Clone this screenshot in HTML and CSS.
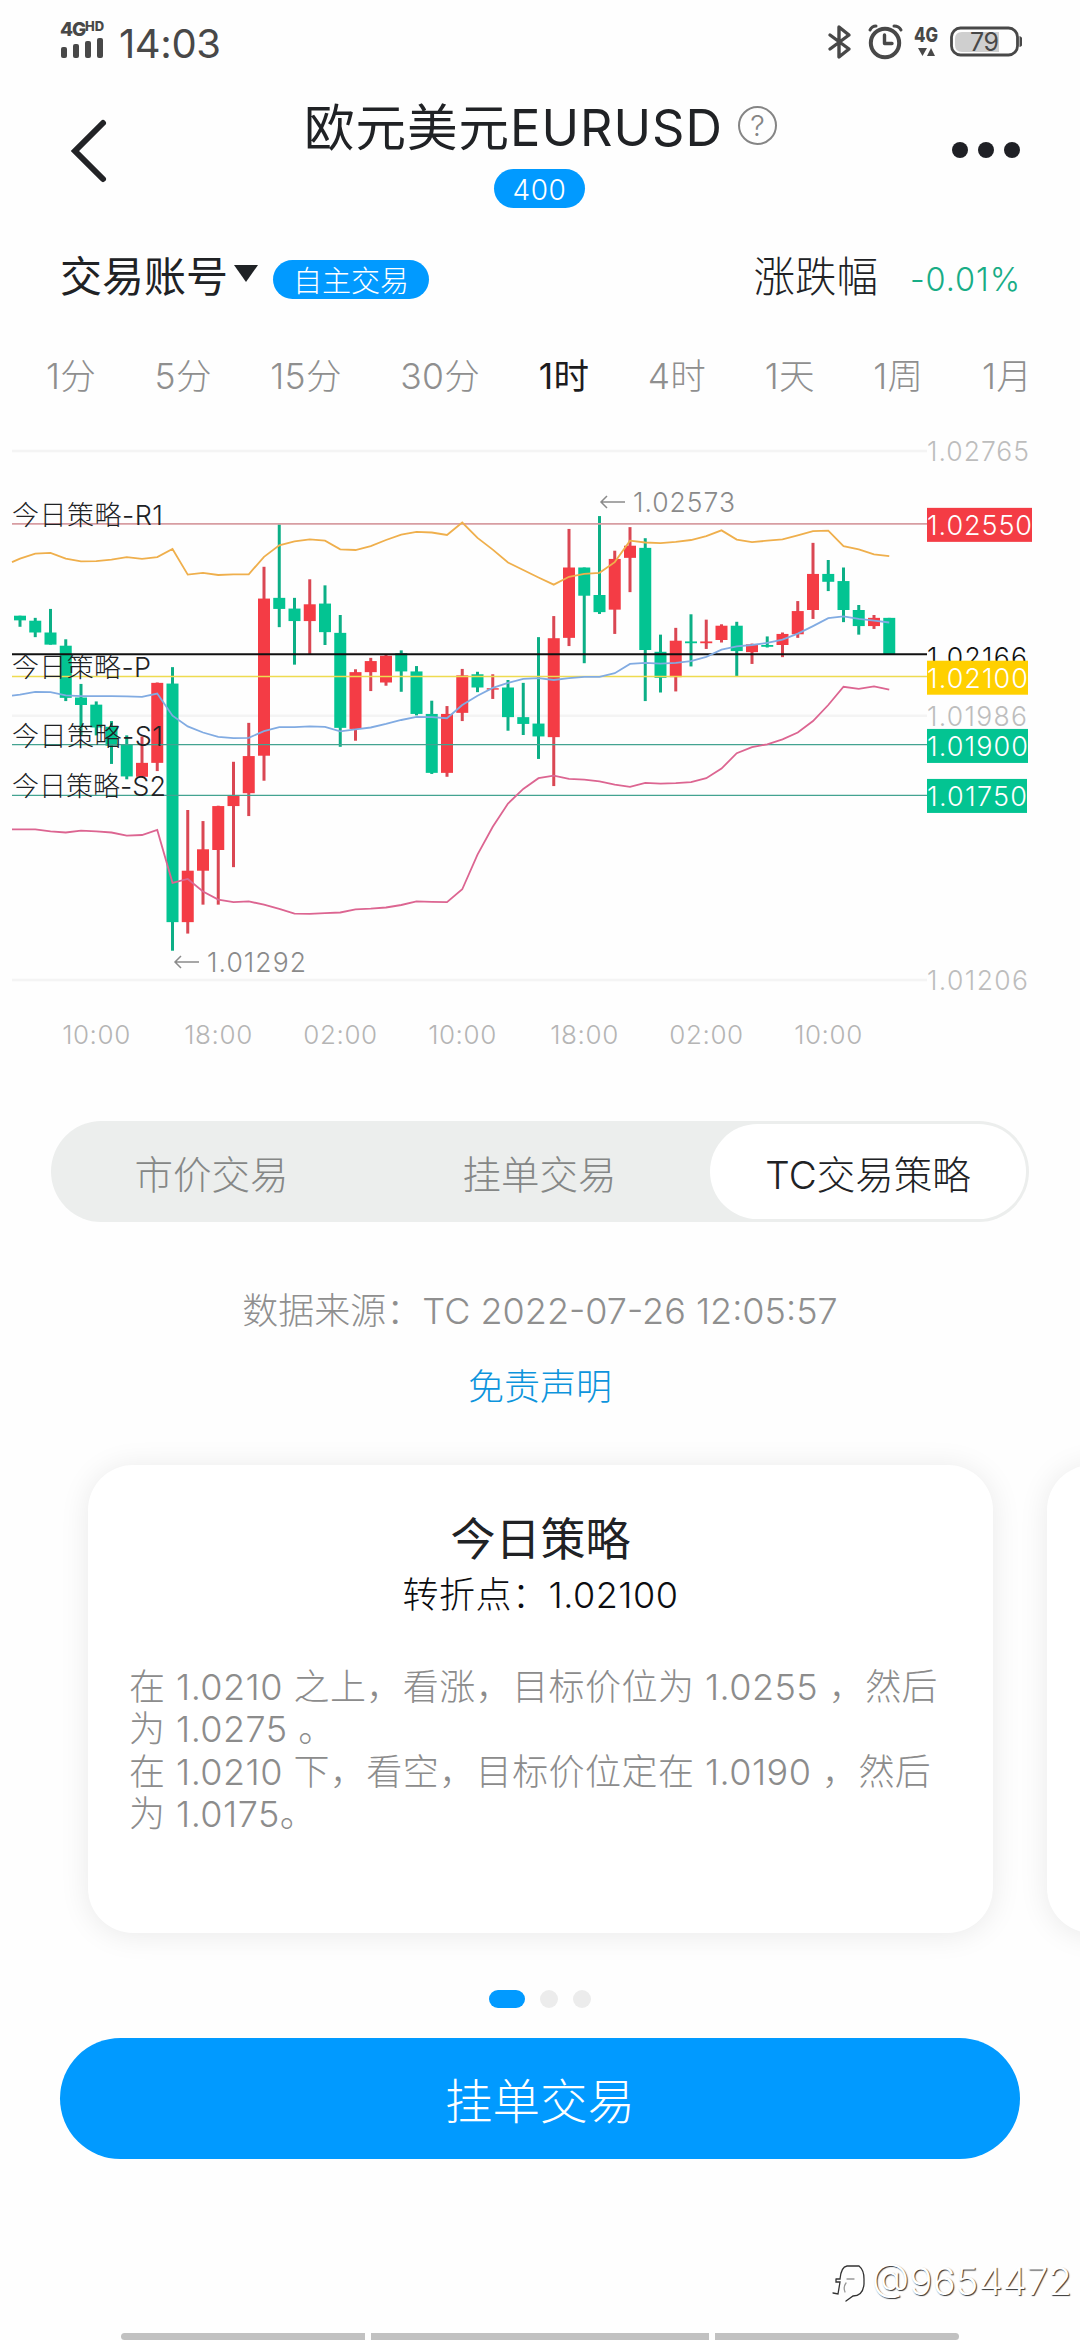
FILE: index.html
```html
<!DOCTYPE html>
<html lang="zh-CN">
<head>
<meta charset="utf-8">
<title>欧元美元EURUSD</title>
<link rel="stylesheet" href="styles.css">
</head>
<body>
<div class="screen">
  <div class="status">
    <div class="carrier">
      <div class="net">4G<span class="hd">HD</span></div>
      <svg class="bars" width="44" height="21" viewBox="0 0 44 21"><g fill="#484848"><rect x="1" y="10" width="6" height="11" rx="2"/><rect x="13" y="7" width="6" height="14" rx="2"/><rect x="25" y="4" width="6" height="17" rx="2"/><rect x="37" y="1" width="6" height="20" rx="2"/></g></svg>
    </div>
    <div class="clock">14:03</div>
    <svg class="status-icons" width="200" height="44" viewBox="0 0 200 44">
      <g fill="none" stroke="#484848" stroke-width="3.4" stroke-linecap="round" stroke-linejoin="round">
        <path d="M8 15L27 29L17 37V7L27 15L8 29"/>
        <circle cx="63" cy="23" r="14.2" stroke-width="4"/>
        <path d="M62.5 15V23.500H70" />
        <path d="M48 10Q50 6 54 6M72 6Q77 6 79 10" stroke-width="3"/>
        <rect x="129.500" y="8" width="66" height="27" rx="9" stroke-width="2.800"/>
      </g>
      <path d="M140 12H177V32H140Q133 32 133 25V19Q133 12 140 12Z" fill="#cfcfcf"/>
      <path d="M197.500 16Q201 17 201 22Q201 26 197.500 27Z" fill="#484848"/>
      <path d="M96 28H105L100.500 36ZM105 36H113L109 28Z" fill="#484848"/>
      <text class="lte" x="92" y="22" textLength="24" lengthAdjust="spacingAndGlyphs">4G</text>
      <text class="charge" x="148" y="31" textLength="29">79</text>
    </svg>
  </div>

  <header class="header">
    <svg class="back" width="40" height="68" viewBox="0 0 40 68"><path d="M34 6L6 34L34 62" fill="none" stroke="#222326" stroke-width="6" stroke-linecap="round"/></svg>
    <div class="heading">
      <div class="title-line"><h1>欧元美元EURUSD</h1><span class="help">?</span></div>
      <span class="pill leverage">400</span>
    </div>
    <div class="more"><i></i><i></i><i></i></div>
  </header>

  <div class="account">
    <span class="account-name">交易账号</span>
    <svg class="caret" width="24" height="17" viewBox="0 0 24 17"><path d="M0 0H24L12 17Z" fill="#1f2225"/></svg>
    <span class="pill mode">自主交易</span>
    <span class="change-label">涨跌幅</span>
    <span class="change">-0.01%</span>
  </div>

  <nav class="periods">
    <span>1分</span><span>5分</span><span>15分</span><span>30分</span><span class="on">1时</span><span>4时</span><span>1天</span><span>1周</span><span>1月</span>
  </nav>

  <svg class="chart" id="chart" width="1080" height="630" viewBox="0 0 1080 630"></svg>

  <div class="segments">
    <span>市价交易</span><span>挂单交易</span><span class="selected">TC交易策略</span>
  </div>

  <p class="source">数据来源：TC 2022-07-26 12:05:57</p>
  <p class="disclaimer">免责声明</p>

  <div class="carousel">
    <section class="card">
      <h2>今日策略</h2>
      <p class="pivot">转折点：1.02100</p>
      <p class="advice">在 1.0210 之上，看涨，目标价位为 1.0255 ，然后<br>为 1.0275 。<br>在 1.0210 下，看空，目标价位定在 1.0190 ，然后<br>为 1.0175。</p>
    </section>
    <section class="card"></section>
  </div>

  <div class="pages"><i class="current"></i><i></i><i></i></div>
  <button class="order">挂单交易</button>

  <div class="watermark">
    <svg width="36" height="42" viewBox="0 0 36 42" fill="none" stroke="#333" stroke-width="1.300" stroke-linecap="round"><path d="M5 19H9Q10 7 16 6H28Q33 10 33 19V24Q32 36 22 36L15 41M5 19V22H9L7 34L2 33"/><path d="M16 19H23M15 23Q12 27 14 32" stroke="#999"/></svg>
    <span>@9654472</span>
  </div>
  <div class="gesture"><i></i><i></i><i></i></div>
</div>
<script src="chart.js"></script>
</body>
</html>
```
FILE: styles.css
```css
* { box-sizing: border-box; }
body { margin: 0; background: #fefefe; font-family: Inter, "Noto Sans CJK SC", sans-serif; color: #202225; }
h1, h2, p { margin: 0; }
.screen { position: relative; width: 1080px; height: 2340px; overflow: hidden; display: flex; flex-direction: column; font-weight: 300; }

.status { height: 84px; display: flex; align-items: flex-start; padding: 20px 60px 0; color: #484848; flex: none; }
.carrier { width: 46px; display: flex; flex-direction: column; }
.net { height: 17px; font: 800 19px/19px Inter, sans-serif; letter-spacing: -1.2px; white-space: nowrap; display: flex; }
.hd { font-size: 13px; line-height: 13px; letter-spacing: 0; }
.bars { display: block; }
.clock { margin-left: 13px; font-size: 40px; line-height: 48px; font-weight: 400; letter-spacing: -.4px; }
.status-icons { margin: 0 -2px 0 auto; }
.lte { font: 800 20px Inter, sans-serif; fill: #484848; }
.charge { font: 400 25px Inter, sans-serif; fill: #484848; }

.header { height: 144px; padding: 0 60px 0 69px; display: flex; justify-content: space-between; align-items: flex-start; flex: none; }
.back { margin-top: 33px; }
.heading { width: 490px; margin-left: 18px; display: flex; flex-direction: column; align-items: center; }
.title-line { display: flex; align-items: center; height: 85px; margin-left: 2px; gap: 15px; }
h1 { font-size: 50.500px; line-height: 76px; font-weight: 400; white-space: nowrap; letter-spacing: 1px; padding-top: 2px; }
.help { width: 39px; height: 39px; margin-top: -2px; border: 2px solid #858585; border-radius: 50%; font-size: 29px; line-height: 35px; text-align: center; color: #858585; }
.pill { display: flex; align-items: center; justify-content: center; height: 39px; border-radius: 20px; background: #019aff; color: #fff; font-size: 28px; padding-top: 2px; }
.leverage { width: 91px; letter-spacing: .6px; }
.more { display: flex; gap: 10px; margin-top: 58px; }
.more i { width: 16px; height: 16px; border-radius: 50%; background: #1f2025; }

.account { height: 102px; padding: 0 59px 0 60px; display: flex; align-items: center; flex: none; }
.account-name { font-size: 42px; line-height: 60px; font-weight: 400; margin-top: -5px; }
.caret { margin: -12px 0 0 6px; }
.mode { width: 156px; margin-left: 15px; font-size: 29px; padding-top: 0; }
.change-label { margin: -10px 32px 0 auto; font-size: 41.500px; }
.change { font-size: 32.500px; letter-spacing: .9px; color: #18ad86; }

.periods { height: 90px; padding: 0 48px 4px 46px; display: flex; justify-content: space-between; align-items: center; font-size: 35.500px; letter-spacing: .3px; color: #8f8f8f; flex: none; }
.periods .on { color: #1c1c1e; font-weight: 400; }

.chart { display: block; margin-top: 10px; flex: none; }
.chart text { font-family: Inter, "Noto Sans CJK SC", sans-serif; font-weight: 300; }
.axis { font-size: 26.500px; fill: #bdbdbd; }
.time { font-size: 26px; letter-spacing: .6px; fill: #b5b5b5; }
.tagtext { font-size: 27px; fill: #fff; }
.last { font-size: 26.500px; fill: #111; }
.peak { font-size: 26.500px; fill: #8a8a8a; }
.level { font-size: 27px; fill: #202225; }

.segments { margin: 61px 51px 0; height: 101px; padding: 3px; border-radius: 51px; background: #eceeed; display: grid; grid-template-columns: 315px 341px 316px; flex: none; font-size: 38.500px; color: #858786; }
.segments span { display: flex; align-items: center; justify-content: center; }
.segments .selected { background: #fff; border-radius: 48px; color: #202225; }

.source { margin-top: 61px; height: 56px; text-align: center; font-size: 36px; line-height: 56px; color: #8f8f8f; flex: none; }
.disclaimer { margin-top: 20px; height: 56px; text-align: center; font-size: 36px; line-height: 56px; color: #0d94dc; flex: none; }

.carousel { margin-top: 50px; padding-left: 88px; display: flex; gap: 54px; flex: none; }
.card { width: 905px; height: 468px; padding: 45px 42px 0; border-radius: 45px; background: #fff; box-shadow: 0 2px 30px rgba(0, 0, 0, .085); flex: none; }
h2 { font-size: 45px; line-height: 60px; font-weight: 400; text-align: center; }
.pivot { font-size: 36px; line-height: 50px; text-align: center; font-weight: 300; letter-spacing: .5px; color: #0c0d10; }
.advice { margin-top: 46px; margin-left: -1px; font-size: 36px; line-height: 42.300px; letter-spacing: .45px; color: #8c8c8c; white-space: nowrap; }

.pages { margin-top: 57px; display: flex; justify-content: center; gap: 15px; flex: none; }
.pages i { width: 18px; height: 18px; border-radius: 9px; background: #ececec; }
.pages .current { width: 36px; background: #019aff; }
.order { margin: 30px 60px 0; height: 121px; border: 0; border-radius: 61px; background: #019aff; color: #fff; font: 300 47.500px Inter, "Noto Sans CJK SC", sans-serif; padding: 0 0 1px; flex: none; }

.watermark { margin: 96px 8px 0 0; height: 52px; display: flex; justify-content: flex-end; align-items: center; gap: 5px; font-size: 38.500px; font-weight: 300; color: #fff; text-shadow: 1px 1px 1px #333; flex: none; }
.gesture { margin: auto 121px 0; height: 7px; display: grid; grid-template-columns: 244px 338px 244px; gap: 6px; flex: none; }
.gesture i { background: #c1c1c1; }
.gesture i:first-child { border-radius: 4px 0 0 4px; }
.gesture i:last-child { border-radius: 0 4px 4px 0; }
```
FILE: chart.js
```js
// Vertical values are plot units, 2.8 of them to a pixel.
const y = v => +(v / 2.8).toFixed(2);
const x = i => 20 + i * 15.25;

// colour, high, body top, body bottom, low
const candles = `g 520 520 533 551|g 526 534 567 580|g 501 567 601 601|g 586 604 750 759|g 711 749 770 855|g 760 769 833 855|g 815 831 884 935|g 855 880 970 978|r 858 932 971 971|r 707 708 932 955|g 664 710 1378 1458|r 1064 1234 1378 1410|r 1095 1174 1234 1329|r 1052 1053 1176 1329|r 929 1023 1053 1224|r 820 913 1017 1081|r 383 472 912 982|g 264 470 501 552|g 470 500 535 657|r 418 488 535 628|g 435 486 566 602|g 518 568 834 887|r 670 678 837 870|r 638 647 678 731|r 629 632 707 716|g 617 625 676 733|g 661 676 795 799|g 758 795 960 963|r 773 795 960 971|r 669 687 792 815|g 677 684 721 734|r 684 723 727 753|g 700 721 804 842|g 708 804 823 854|g 580 822 858 921|r 521 583 860 997|r 277 385 582 605|g 385 385 464 653|g 241 462 510 515|r 338 361 503 571|r 272 324 358 454|g 303 330 616 759|g 573 621 694 735|r 554 590 692 732|g 516 592 597 662|r 531 592 597 613|r 544 548 588 595|g 537 548 619 689|r 598 600 622 655|g 578 602 607 609|r 567 571 602 636|r 479 507 572 582|r 316 403 504 529|g 364 403 425 451|g 385 423 504 538|g 490 504 549 573|r 518 526 549 557|g 526 526 628 628`;

const bands = [
  ['#efaf4c', 370, '360 346 344 360 368 367 363 356 361 356 333 405 400 406 404 404 355 323 312 306 310 334 336 325 308 293 285 287 294 259 302 335 371 392 413 433 411 403 400 370 310 315 317 313 308 297 281 307 314 310 306 295 283 282 325 334 348 353'],
  ['#81abe2', 744, '741 733 734 743 745 745 745 746 747 738 800 830 847 859 863 862 843 832 832 830 831 844 838 833 823 812 803 804 807 770 744 722 708 697 695 700 695 691 691 681 655 652 654 652 647 635 615 606 602 596 587 570 549 527 522 529 534 539'],
  ['#dc6591', 1118, '1118 1118 1124 1127 1122 1124 1127 1136 1134 1120 1268 1257 1292 1315 1322 1320 1329 1341 1354 1355 1353 1351 1342 1340 1337 1330 1320 1321 1322 1286 1189 1111 1046 1005 975 968 977 979 984 993 999 988 990 989 986 975 948 905 888 880 866 847 815 770 719 725 718 727']
];

const rule = (v, colour, w) => `<path d="M12 ${y(v)}H927" stroke="${colour}" stroke-width="${w}"/>`;
const text = (cls, tx, ty, s, len) => `<text class="${cls}" x="${tx}" y="${ty}" textLength="${len}">${s}</text>`;
const tag = (v, h, colour, w, s) => `<rect x="927" y="${y(v)}" width="${w}" height="${h}" fill="${colour}"/>` + text('tagtext', 927, y(v) + 27, s, w);

let out = [59, 800, 1540].map(v => rule(v, '#f4f4f4', 2.5)).join('');

candles.split('|').forEach((row, i) => {
  const [c, hi, top, bottom, lo] = row.split(' ');
  const body = c === 'g' ? '#03c492' : '#f43c45';
  const wick = c === 'g' ? '#0caf86' : '#da4753';
  out += `<rect x="${x(i) - 1.5}" y="${y(hi)}" width="3" height="${y(lo - hi)}" fill="${wick}"/>`;
  out += `<rect x="${x(i) - 6}" y="${y(top)}" width="12" height="${y(bottom - top)}" fill="${body}"/>`;
});

out += rule(263, '#d79da2', 1.8) + rule(628, '#111', 2) + rule(690, '#eedb50', 1.4) + rule(881, '#43a391', 1.3) + rule(1023, '#43a391', 1.3);

bands.forEach(([colour, start, values]) => {
  const pts = values.split(' ').map((v, i) => `${x(i)},${y(v)}`).join(' ');
  out += `<polyline points="12,${y(start)} ${pts}" fill="none" stroke="${colour}" stroke-width="1.8"/>`;
});

[['R1', 263, 151], ['P', 690, 139], ['S1', 881, 151], ['S2', 1023, 154]].forEach(([s, v, len]) => {
  out += text('level', 12, y(v) + 1, '今日策略-' + s, len);
});

out += text('axis', 927, 31, '1.02765', 102) + text('axis', 927, 296, '1.01986', 100) + text('axis', 927, 560, '1.01206', 101);
out += text('last', 927, 236.5, '1.02166', 100);
out += tag(218, 34, '#f43c45', 105, '1.02550') + tag(646, 34, '#ffd000', 101, '1.02100') + tag(837, 34, '#03c492', 101, '1.01900') + tag(977, 34, '#03c492', 100, '1.01750');

const arrow = (ax, ay) => `<path d="M${ax + 24} ${ay}H${ax}M${ax + 6} ${ay - 6}L${ax} ${ay}L${ax + 6} ${ay + 6}" fill="none" stroke="#8a8a8a" stroke-width="1.5"/>`;
out += arrow(601, 72) + text('peak', 633, 82, '1.02573', 102) + arrow(175, 532) + text('peak', 207, 541.5, '1.01292', 99);

['10:00', '18:00', '02:00', '10:00', '18:00', '02:00', '10:00'].forEach((s, i) => {
  out += `<text class="time" x="${96.5 + i * 122}" y="614" text-anchor="middle">${s}</text>`;
});

document.getElementById('chart').innerHTML = out;
```
